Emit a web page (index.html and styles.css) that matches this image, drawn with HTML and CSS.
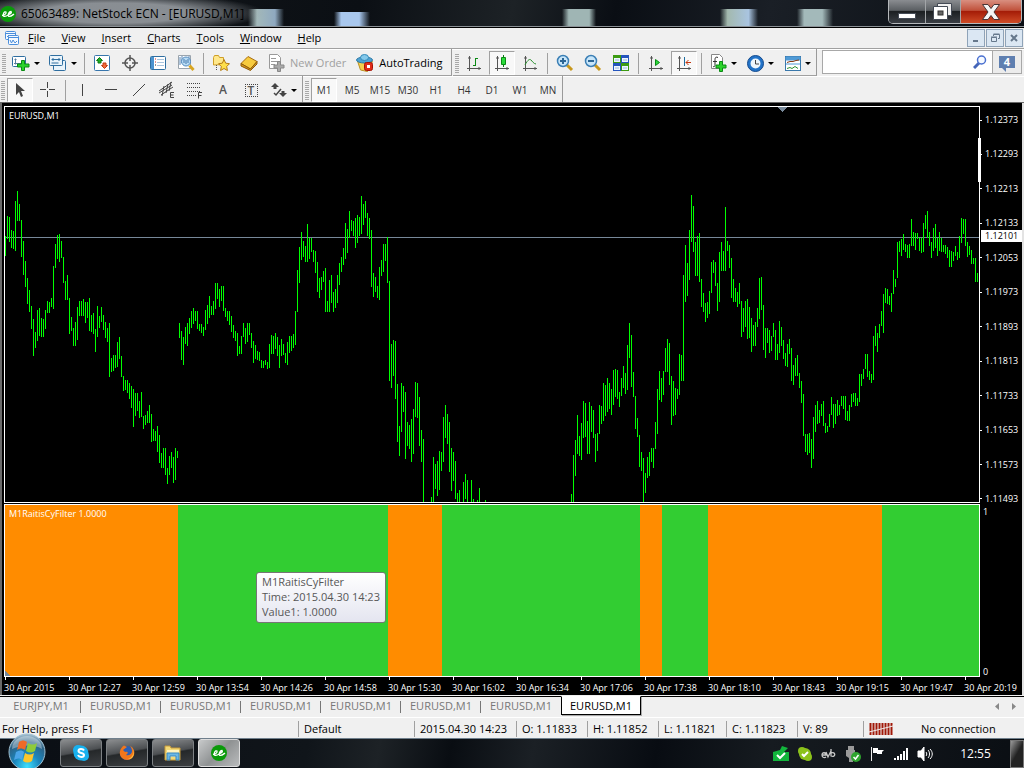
FILE: index.html
```html
<!DOCTYPE html>
<html lang="en">
<head>
  <meta charset="UTF-8">
  <meta name="viewport" content="width=device-width, initial-scale=1.0">
  <title>65063489: NetStock ECN - [EURUSD,M1]</title>
  <link rel="stylesheet" href="styles.css">
</head>
<body>
  <header class="titlebar">
    <svg class="logo" width="16" height="16" viewBox="0 0 16 16"><circle cx="8" cy="8" r="8" fill="#0a9a0a"/><path d="M2 9.500C5 9 6.500 7.500 6 6C4.500 5 2.500 8 3.500 10C5 11.500 7.500 9.500 9 8.500C11 7.500 12 6.500 11 5.500C9 5.500 7.500 9 8.500 10.200C10 11.200 12 9.500 14 8" fill="none" stroke="#fff" stroke-width="1.300"/></svg>
    <h1>65063489: NetStock ECN - [EURUSD,M1]</h1>
    <div class="window-buttons">
      <button aria-label="Minimize"><svg width="20" height="20" viewBox="0 0 20 20"><rect x="1.500" y="11.500" width="17" height="5" fill="#fff" stroke="#444a55"/></svg></button>
      <button aria-label="Restore"><svg width="20" height="20" viewBox="0 0 20 20"><path d="M4.500 1.500h14v12h-14z" fill="#eee" stroke="#444a55"/><path d="M.5 4.500h14v13h-14z" fill="#fff" stroke="#444a55"/><rect x="5" y="9" width="5" height="4" fill="#666" stroke="#333"/></svg></button>
      <button class="close" aria-label="Close"><svg width="20" height="18" viewBox="0 0 20 18"><path d="M1.500 1.500h5.500L10 5.500l3-4h5.500L13 9l5.500 7.500H13L10 12.500l-3 4H1.500L7 9z" fill="#f4f4f4" stroke="#4a3436"/></svg></button>
    </div>
  </header>

  <nav class="menubar">
    <svg width="16" height="16" viewBox="0 0 16 16" fill="#f4f9ff" stroke="#4b8edb"><rect x="1.500" y="1.500" width="10" height="8" rx="1"/><path d="M1.500 3.500h10M3 7l2-2 2 2"/><rect x="4.500" y="5.500" width="10" height="9" rx="1"/><path d="M4.500 7.500h10M6 10l1.500 3L9 10l2 3 2-2" fill="none"/></svg>
    <a href="#"><u>F</u>ile</a>
    <a href="#"><u>V</u>iew</a>
    <a href="#"><u>I</u>nsert</a>
    <a href="#"><u>C</u>harts</a>
    <a href="#"><u>T</u>ools</a>
    <a href="#"><u>W</u>indow</a>
    <a href="#"><u>H</u>elp</a>
    <div class="mdi-buttons">
      <button aria-label="Minimize chart"><svg width="10" height="10" viewBox="0 0 10 10"><path d="M2 8h5" stroke="#66788c" stroke-width="2"/></svg></button>
      <button aria-label="Restore chart"><svg width="10" height="10" viewBox="0 0 10 10" fill="none" stroke="#66788c"><path d="M3.500 3V1.500h6v4H8M3.500 1h6M1.500 4.500h5v4h-5zM1 4h6"/></svg></button>
      <button aria-label="Close chart"><svg width="10" height="10" viewBox="0 0 10 10"><path d="M2 2l6 6M8 2L2 8" stroke="#66788c" stroke-width="2"/></svg></button>
    </div>
  </nav>

  <div class="toolbar-row">
    <div class="toolbar">
      <span class="grip"></span>
      <button class="tool drop" aria-label="New chart"><svg width="18" height="16" viewBox="0 0 18 16"><rect x=".5" y="1.500" width="13" height="10" rx="1" fill="#fff" stroke="#2f6ea0"/><path d="M3.500 3.500v6M2.500 4.500h2M2 8.500h7" stroke="#5a7f9f"/><path d="M9.500 5.500h3v3.500H17v3h-4.500v3.500h-3V12H5.500V9h4z" fill="#2bd32b" stroke="#0a8a14"/></svg></button>
      <button class="tool drop" aria-label="Profiles"><svg width="18" height="16" viewBox="0 0 18 16" fill="#eaf4fb" stroke="#2f6ea0"><rect x="4.500" y="5.500" width="12" height="10" rx="1"/><rect x=".5" y=".5" width="13" height="10" rx="1"/><path d="M2.500 4.500h9M4 3v3M10 3v3M2.500 8h7"/></svg></button>
      <span class="sep"></span>
      <button class="tool" aria-label="Market Watch"><svg width="16" height="16" viewBox="0 0 16 16"><rect x=".5" y=".5" width="15" height="15" rx="1" fill="#fff" stroke="#3876ad"/><path d="M5.500 2.500l3 3h-1.500v2.500H4V5.500H2.500z" fill="#1fae27" stroke="#0b7a13"/><path d="M10.500 13.500l3-3H12V8H9v2.500H7.500z" fill="#f26b3a" stroke="#c03d12"/></svg></button>
      <button class="tool" aria-label="Data Window"><svg width="16" height="16" viewBox="0 0 16 16" fill="none" stroke="#555" stroke-width="1.500"><circle cx="8" cy="8" r="5"/><path d="M8 0v6M8 10v6M0 8h6M10 8h6"/></svg></button>
      <button class="tool" aria-label="Navigator"><svg width="16" height="16" viewBox="0 0 16 16"><rect x=".5" y="1.500" width="15" height="13" rx="1" fill="#fff" stroke="#2f6ea0"/><path d="M1 2h3v12H1z" fill="#4b93cf"/><path d="M7 4.500h7M7 7.500h7M7 10.500h7" stroke="#a9c4dd"/><path d="M5 4h1M5 7h1" stroke="#c22"/><path d="M5 10h1" stroke="#222"/></svg></button>
      <button class="tool" aria-label="Strategy Tester"><svg width="18" height="18" viewBox="0 0 18 18"><path d="M1.500 1.500h12v13h-12z" fill="#fff" stroke="#9aa4ad"/><path d="M3 3v8M5 2v7M12 2v6" stroke="#5a86b5"/><circle cx="9" cy="7.500" r="4.500" fill="#b9dcf5" stroke="#5089bd"/><path d="M7 5v4M9 6v4M11 5v4" stroke="#4479ac"/><path d="M12.500 11.500l4 4.500" stroke="#d8a520" stroke-width="3"/></svg></button>
      <span class="sep"></span>
      <button class="tool" aria-label="Favorites"><svg width="18" height="18" viewBox="0 0 18 18"><path d="M1.500 11V3.500l1-2h4l1 2h4v7z" fill="#ffe88b" stroke="#cf9f27"/><path d="M4.500 11v6" stroke="#555" stroke-dasharray="1 1"/><path d="M12 5.500l1.700 3.700 3.800.5-2.800 2.800.7 4-3.400-2-3.400 2 .7-4L6.500 9.700l3.800-.5z" fill="#ffdf4a" stroke="#b57b14"/></svg></button>
      <button class="tool" aria-label="Market"><svg width="18" height="16" viewBox="0 0 18 16"><path d="M1 8.500L8 1.500l9 5-6.500 7.500z" fill="#f7cb3e" stroke="#a86d10"/><path d="M1 8.500l9.500 5.500L17 6.500v2.500l-6.500 6.500L1 11z" fill="#d79a1c" stroke="#8e5a0b"/></svg></button>
      <button class="tool labeled disabled" disabled><svg width="17" height="18" viewBox="0 0 17 18"><path d="M1.500.5h8l3 3v11h-11z" fill="#fff" stroke="#999"/><path d="M3 4.500h5M3 7.500h7M3 10.500h4" stroke="#999"/><path d="M9.500 7.500h3V11H16v3h-3.500v3.500h-3V14H6v-3h3.500z" fill="#aaa" stroke="#888"/></svg>New Order</button>
      <button class="tool labeled"><svg width="18" height="18" viewBox="0 0 18 18"><path d="M1.500 7l3 9 7 1.500 5-10z" fill="#f4cf4c" stroke="#b88f22"/><ellipse cx="8.500" cy="6" rx="8" ry="3" fill="#4fa3d2" stroke="#2877a6"/><ellipse cx="8.500" cy="3.500" rx="4" ry="3" fill="#83c8ea" stroke="#3389b8"/><rect x="8.500" y="8.500" width="8" height="8" rx="2" fill="#e02a16" stroke="#a51207"/><rect x="11" y="11" width="3" height="3" fill="#fff"/></svg>AutoTrading</button>
    </div>
    <div class="toolbar">
      <span class="grip"></span>
      <button class="tool" aria-label="Bar chart"><svg width="16" height="16" viewBox="0 0 16 16" fill="none" stroke="#555"><path d="M3.500 1v15M1 13.500h14M2 3h3M13 12v3"/><path d="M9.500 3v8M9 3.500h3M7 10.500h3" stroke="#0a8a14"/></svg></button>
      <button class="tool pressed" aria-label="Candlesticks"><svg width="16" height="16" viewBox="0 0 16 16" fill="none" stroke="#555"><path d="M3.500 1v15M1 13.500h14M2 3h3M13 12v3"/><path d="M9.500 0v12" stroke="#0a7a14"/><path d="M7.500 2.500h4v7h-4z" fill="#2bdc3b" stroke="#0a8a14"/></svg></button>
      <button class="tool" aria-label="Line chart"><svg width="16" height="16" viewBox="0 0 16 16" fill="none" stroke="#555"><path d="M3.500 1v15M1 13.500h14M2 3h3M13 12v3"/><path d="M3 10c3-6 5-6 6-5s3 4 5 4" stroke="#2a8f2f"/></svg></button>
      <span class="sep"></span>
      <button class="tool" aria-label="Zoom in"><svg width="18" height="18" viewBox="0 0 18 18"><path d="M11 11l5 5" stroke="#c8981c" stroke-width="3"/><circle cx="7" cy="7" r="5.500" fill="#c8e6fa" stroke="#3b7fb5" stroke-width="1.500"/><path d="M4 7h6M7 4v6" stroke="#2c6695" stroke-width="2"/></svg></button>
      <button class="tool" aria-label="Zoom out"><svg width="18" height="18" viewBox="0 0 18 18"><path d="M11 11l5 5" stroke="#c8981c" stroke-width="3"/><circle cx="7" cy="7" r="5.500" fill="#c8e6fa" stroke="#3b7fb5" stroke-width="1.500"/><path d="M4 7h6" stroke="#2c6695" stroke-width="2"/></svg></button>
      <button class="tool" aria-label="Tile windows"><svg width="16" height="16" viewBox="0 0 16 16"><path d="M0 0h8v8H0zM8 8h8v8H8z" fill="#3c9b12"/><path d="M8 0h8v8H8zM0 8h8v8H0z" fill="#2454bd"/><path d="M1 3h6v4H1zM9 3h6v4H9zM1 11h6v4H1zM9 11h6v4H9z" fill="#eef6ff"/><path d="M2 5h4M10 5h4M2 13h4M10 13h4" stroke="#9bb8d8"/></svg></button>
      <span class="sep"></span>
      <button class="tool" aria-label="Auto scroll"><svg width="16" height="16" viewBox="0 0 16 16" fill="none" stroke="#555"><path d="M3.500 1v15M1 13.500h14M2 3h3M13 12v3"/><path d="M7.500 4.500l4 3-4 3z" fill="#2bdc3b" stroke="#0a8a14"/></svg></button>
      <button class="tool pressed" aria-label="Chart shift"><svg width="16" height="16" viewBox="0 0 16 16" fill="none" stroke="#555"><path d="M3.500 1v15M1 13.500h14M2 3h3M13 12v3"/><path d="M8.500 2v9" stroke="#1f6da0"/><path d="M10 7.500h5M12.500 5L10 7.500l2.500 2.500" stroke="#c4370f"/></svg></button>
      <span class="sep"></span>
      <button class="tool drop" aria-label="Indicators"><svg width="17" height="18" viewBox="0 0 17 18"><path d="M1.500.5h8l3 3v11h-11z" fill="#fff" stroke="#888"/><path d="M8 3.500c-2-1-3 0-3 2v6c0 1-1 1.500-2 1M3 7.500h4" fill="none" stroke="#333"/><path d="M9.500 7.500h3V11H16v3h-3.500v3.500h-3V14H6v-3h3.500z" fill="#2bd32b" stroke="#0a8a14"/></svg></button>
      <button class="tool drop" aria-label="Periods"><svg width="17" height="17" viewBox="0 0 17 17"><circle cx="8.500" cy="8.500" r="6.500" fill="#eef6fc" stroke="#2273c8" stroke-width="3"/><path d="M8.500 5v4H12" fill="none" stroke="#444"/><circle cx="8.500" cy="8.500" r="8" fill="none" stroke="#154b8d"/></svg></button>
      <button class="tool drop" aria-label="Templates"><svg width="16" height="16" viewBox="0 0 16 16"><rect x=".5" y="1.500" width="15" height="14" fill="#fff" stroke="#3a78ab"/><path d="M1 2h14v3H1zM1 9h14" fill="#4f9ad6" stroke="#4f9ad6"/><path d="M2 7.500l3-1h3l3-1 3-.5" fill="none" stroke="#8a3a12"/><path d="M2 13.500l3-1 2 1 3-2 3 2" fill="none" stroke="#2a8f2f"/></svg></button>
    </div>
    <form class="search">
      <input type="text" aria-label="Search">
      <button type="button" class="find" aria-label="Find"><svg width="14" height="14" viewBox="0 0 14 14" fill="none"><path d="M6 8l-5 5" stroke="#4465b8" stroke-width="3"/><circle cx="8.500" cy="5" r="4" fill="#f6faff" stroke="#4a70d0" stroke-width="1.500"/></svg></button>
      <button type="button" class="alerts" aria-label="4 messages"><span>4</span></button>
    </form>
  </div>

  <div class="toolbar-row second">
    <div class="toolbar">
      <span class="grip"></span>
      <button class="tool pressed" aria-label="Cursor"><svg width="16" height="16" viewBox="0 0 16 16"><path d="M4 1v12l3-3 2 5 2-1-2-5h4z" fill="#444"/></svg></button>
      <button class="tool" aria-label="Crosshair"><svg width="16" height="16" viewBox="0 0 16 16" stroke="#444"><path d="M7.500 0v6M7.500 9v6M0 7.500h6M9 7.500h6"/></svg></button>
      <span class="sep"></span>
      <button class="tool" aria-label="Vertical line"><svg width="16" height="16" viewBox="0 0 16 16" stroke="#444"><path d="M7.500 2v12"/></svg></button>
      <button class="tool" aria-label="Horizontal line"><svg width="16" height="16" viewBox="0 0 16 16" stroke="#444"><path d="M2 7.500h12"/></svg></button>
      <button class="tool" aria-label="Trendline"><svg width="16" height="16" viewBox="0 0 16 16" stroke="#444"><path d="M2 14L14 2"/></svg></button>
      <button class="tool" aria-label="Equidistant channel"><svg width="18" height="18" viewBox="0 0 18 18" stroke="#444" fill="none"><path d="M1 10L14 1M3 14L15 6M4 15L6 5M8 12l2-9M11 10l2-9M1 12l13-8"/><path d="M16 11.500h-3.500v5H16M12 14h3.500"/></svg></button>
      <button class="tool" aria-label="Fibonacci retracement"><svg width="18" height="18" viewBox="0 0 18 18" stroke="#444" fill="none"><path d="M1 2.500h14M1 6.500h14M1 10.500h14M1 14.500h9" stroke-dasharray="1 1"/><path d="M16 11.500h-3.500v6M12 14.500h3.500"/></svg></button>
      <button class="tool letter">A</button>
      <button class="tool letter boxed" aria-label="Text label"><span>T</span></button>
      <button class="tool drop" aria-label="Arrows"><svg width="16" height="16" viewBox="0 0 16 16" fill="#444"><path d="M4 1l4 4H5.500v2h-3V5H0zM12 15l-4-4h2.500V9h3v2H16z"/><path d="M3 11l2 2 5-6" fill="none" stroke="#444" stroke-width="1.500"/></svg></button>
    </div>
    <div class="toolbar">
      <span class="grip"></span>
      <button class="tool pressed">M1</button>
      <button class="tool">M5</button>
      <button class="tool">M15</button>
      <button class="tool">M30</button>
      <button class="tool">H1</button>
      <button class="tool">H4</button>
      <button class="tool">D1</button>
      <button class="tool">W1</button>
      <button class="tool">MN</button>
    </div>
  </div>

  <main class="chart">
    <section class="pane price">
      <h2>EURUSD,M1</h2>
      <svg class="plot" id="bars" viewBox="0 9 2922 1185" preserveAspectRatio="none" shape-rendering="crispEdges">
        <rect x="0" y="399" width="2922" height="3" fill="#778899"/>
        <path d="M2316 9h30l-15 15z" fill="#778899"/>
      </svg>
    </section>
    <div class="scale">
      <span>1.12373</span>
      <span>1.12293</span>
      <span>1.12213</span>
      <span>1.12133</span>
      <span>1.12053</span>
      <span>1.11973</span>
      <span>1.11893</span>
      <span>1.11813</span>
      <span>1.11733</span>
      <span>1.11653</span>
      <span>1.11573</span>
      <span>1.11493</span>
      <b class="bid">1.12101</b>
      <i class="thumb"></i>
    </div>
    <section class="pane filter">
      <h2>M1RaitisCyFilter 1.0000</h2>
      <svg class="plot" viewBox="0 0 974 171" preserveAspectRatio="none" shape-rendering="crispEdges">
        <rect width="974" height="171" fill="#32cd32"/>
        <path d="M0 0h173v171H0zM383 0h54v171h-54zM635 0h22v171h-22zM703 0h174v171H703z" fill="#ff8c00"/>
        <path d="M0 166l5 5H0z" fill="#778899"/>
      </svg>
      <div class="tip">M1RaitisCyFilter<br>Time: 2015.04.30 14:23<br>Value1: 1.0000</div>
    </section>
    <div class="scale range"><span>1</span><span>0</span></div>
    <div class="times">
      <span>30 Apr 2015</span>
      <span>30 Apr 12:27</span>
      <span>30 Apr 12:59</span>
      <span>30 Apr 13:54</span>
      <span>30 Apr 14:26</span>
      <span>30 Apr 14:58</span>
      <span>30 Apr 15:30</span>
      <span>30 Apr 16:02</span>
      <span>30 Apr 16:34</span>
      <span>30 Apr 17:06</span>
      <span>30 Apr 17:38</span>
      <span>30 Apr 18:10</span>
      <span>30 Apr 18:43</span>
      <span>30 Apr 19:15</span>
      <span>30 Apr 19:47</span>
      <span>30 Apr 20:19</span>
    </div>
  </main>

  <nav class="tabs">
    <a href="#">EURJPY,M1</a>
    <a href="#">EURUSD,M1</a>
    <a href="#">EURUSD,M1</a>
    <a href="#">EURUSD,M1</a>
    <a href="#">EURUSD,M1</a>
    <a href="#">EURUSD,M1</a>
    <a href="#">EURUSD,M1</a>
    <a href="#" class="active">EURUSD,M1</a>
    <div class="tab-arrows">
      <button aria-label="Previous"><svg width="4" height="7" viewBox="0 0 4 7"><path d="M4 0v7L0 3.500z" fill="#888"/></svg></button>
      <button aria-label="Next"><svg width="4" height="7" viewBox="0 0 4 7"><path d="M0 0v7l4-3.500z" fill="#888"/></svg></button>
    </div>
  </nav>

  <div class="status">
    <span class="help">For Help, press F1</span>
    <span class="profile">Default</span>
    <span class="date">2015.04.30 14:23</span>
    <span class="quote">O: 1.11833</span>
    <span class="quote">H: 1.11852</span>
    <span class="quote narrow">L: 1.11821</span>
    <span class="quote">C: 1.11823</span>
    <span class="volume">V: 89</span>
    <span class="connection"><svg width="24" height="12" viewBox="0 0 24 12"><path d="M1.500 0v12M4.500 0v12M7.500 0v12M10.500 0v12M13.500 0v12M16.500 0v12M19.500 0v12M22.500 0v12" stroke="#a01808" stroke-width="2"/><path d="M0 9l24-6" stroke="#efefef"/></svg>No connection</span>
  </div>

  <footer class="taskbar">
    <button class="start" aria-label="Start">
      <svg width="38" height="36" viewBox="0 0 38 36">
        <defs>
          <radialGradient id="orb" cx=".5" cy=".9" r=".9"><stop offset="0" stop-color="#3fe0ff"/><stop offset=".4" stop-color="#1b86bd"/><stop offset=".75" stop-color="#2d6285"/><stop offset="1" stop-color="#a9c4d4"/></radialGradient>
        </defs>
        <circle cx="19" cy="19" r="18" fill="url(#orb)" stroke="#9fc0d2"/>
        <path d="M4 16a15 13 0 0 1 30 0c-9-5-20-4-30 0z" fill="#fff" opacity=".35"/>
        <path d="M11 9c3-2 5-2 8 0l-2 8c-3-2-5-2-8 0z" fill="#ee6a28"/>
        <path d="M20 10c3 2 6 2 9 0l-2 8c-3 2-6 2-9 0z" fill="#8ecb3a"/>
        <path d="M8 19c3-2 6-2 8 0l-2 8c-2-2-5-2-8 0z" fill="#4aa5e8"/>
        <path d="M17 20c3 2 6 2 9 0l-2 8c-3 2-6 2-9 0z" fill="#fcc62c"/>
      </svg>
    </button>
    <button class="app" aria-label="Skype"><svg width="18" height="18" viewBox="0 0 18 18"><circle cx="6" cy="6" r="5" fill="#19b1ee"/><circle cx="12" cy="12" r="5" fill="#19b1ee"/><circle cx="9" cy="9" r="7.500" fill="#19b1ee"/><path d="M12 6.500C11 4.500 6.500 4.500 6.500 7c0 2.500 5.500 1.500 5.500 4 0 2.500-5 2.500-6 0" fill="none" stroke="#fff" stroke-width="2"/></svg></button>
    <button class="app" aria-label="Firefox"><svg width="18" height="18" viewBox="0 0 18 18"><circle cx="9" cy="9" r="7" fill="#2b5fb4"/><path d="M6 1.500L9 3 5 6l2 2c4-1 3 2 1 3 3 1 6-1 6-4 0-2-1-4-2-5 4 2 5 6 4 9-2 6-9 6-12 3C0 10 2 4 6 1.500z" fill="#f0761c"/><path d="M14 3c3 4 1 11-4 12 5 1 8-6 4-12z" fill="#ffc43a"/></svg></button>
    <button class="app" aria-label="Explorer"><svg width="18" height="18" viewBox="0 0 18 18"><path d="M1 2h5l1 2h9v12H1z" fill="#f3d978" stroke="#c79b3b"/><path d="M3 6h12v7H3z" fill="#fff3bf"/><path d="M3 16V9h12v7h-3v-4H6v4z" fill="#6bb7e6" stroke="#3b88bd"/></svg></button>
    <button class="app current" aria-label="NetStock ECN"><svg width="16" height="16" viewBox="0 0 16 16"><circle cx="8" cy="8" r="8" fill="#0a9a0a"/><path d="M2 9.500C5 9 6.500 7.500 6 6C4.500 5 2.500 8 3.500 10C5 11.500 7.500 9.500 9 8.500C11 7.500 12 6.500 11 5.500C9 5.500 7.500 9 8.500 10.200C10 11.200 12 9.500 14 8" fill="none" stroke="#fff" stroke-width="1.300"/></svg></button>
    <div class="tray">
      <svg width="16" height="16" viewBox="0 0 16 16"><path d="M0 6l7-2 2-4 6 2-4 4h5v9H0z" fill="#12b53c"/><path d="M4 9l3 3 5-5" fill="none" stroke="#fff" stroke-width="2"/></svg>
      <svg width="16" height="16" viewBox="0 0 16 16"><circle cx="5" cy="5" r="4" fill="#8cc21b"/><circle cx="11" cy="11" r="4" fill="#8cc21b"/><circle cx="8" cy="8" r="6" fill="#8cc21b"/><path d="M5 8l2 2 4-4" fill="none" stroke="#fff" stroke-width="2"/></svg>
      <svg width="16" height="16" viewBox="0 0 16 16" fill="none" stroke="#c9c9c9" stroke-width="1.300"><path d="M1 9h4c0-3-4-3-4 0s3 3 4 2M5 6l2 5 3-6M10 3v7c5 2 5-5 0-3"/></svg>
      <svg width="16" height="16" viewBox="0 0 16 16"><path d="M3 0h6v4H3zM1 4h9v6l-2 2v4H4v-4l-3-2z" fill="#9a9a9a"/><circle cx="11" cy="11" r="5" fill="#2fa52f"/><path d="M8.500 11l2 2 3-4" fill="none" stroke="#fff" stroke-width="1.500"/></svg>
      <svg width="16" height="16" viewBox="0 0 16 16"><path d="M2.500 1v14" stroke="#eee"/><path d="M4 2h5v2h6l-2 2v2H8V7H4z" fill="#fff"/></svg>
      <svg width="16" height="16" viewBox="0 0 16 16" fill="#fff"><path d="M1 12h2v2H1zM4 10h2v4H4zM7 8h2v6H7zM10 5h2v9h-2zM13 2h2v12h-2z"/></svg>
      <svg width="16" height="16" viewBox="0 0 16 16" fill="none" stroke="#fff"><path d="M1 5h3l3-4v14l-3-4H1z" fill="#fff"/><path d="M9 6c1 1 1 3 0 4M11 4c2 2 2 6 0 8M13 3c3 3 3 7 0 10"/></svg>
      <time>12:55</time>
      <button class="desktop" aria-label="Show desktop"></button>
    </div>
  </footer>

  <script src="chart.js"></script>
</body>
</html>
```
FILE: styles.css
```css
* {
  box-sizing: border-box;
}
body {
  margin: 0;
  height: 100vh;
  display: flex;
  flex-direction: column;
  overflow: hidden;
  font-family: "Open Sans", "Noto Sans", sans-serif;
  font-size: 11px;
  line-height: 16px;
  color: #000;
  background: #f0f0f0;
}
button {
  border: 0;
  padding: 0;
  margin: 0;
  background: none;
  font: inherit;
  color: inherit;
  display: flex;
  align-items: center;
  justify-content: center;
}
a {
  color: inherit;
  text-decoration: none;
}
svg {
  display: block;
  flex: none;
}
h1, h2 {
  margin: 0;
  font-weight: 400;
}

/* title bar */
.titlebar {
  height: 28px;
  flex: none;
  display: flex;
  align-items: center;
  gap: 5px;
  border-bottom: 1px solid #000;
  box-shadow: inset 0 -1px #8b9196;
  background:
    radial-gradient(ellipse 150px 20px at 115px 13px, rgba(150, 155, 160, 0.9) 50%, transparent),
    linear-gradient(90deg, transparent, #a3b9ba 25%, #8fa9c0 75%, transparent) 248px 9px / 36px 20px no-repeat,
    linear-gradient(90deg, transparent, #a9c8ee 20%, #a9c8ee 70%, transparent) 334px 12px / 36px 16px no-repeat,
    linear-gradient(90deg, transparent, #9fb5b4 20%, #9fb5b4 80%, transparent) 562px 9px / 34px 20px no-repeat,
    linear-gradient(90deg, transparent, #a3b9ae 20%, #a9c4e0 75%, transparent) 720px 9px / 38px 20px no-repeat,
    linear-gradient(90deg, transparent, #a3b9ba 20%, #a3b9ba 70%, transparent) 797px 9px / 36px 20px no-repeat,
    linear-gradient(100deg, #14181b, #0b0f14 35%, #1d2226 50%, #0a0e14 60%, #1a1f26 75%, #0a0e14);
}
.titlebar .logo {
  align-self: flex-start;
  margin-top: 6px;
}
.titlebar h1 {
  font-size: 12px;
}
.window-buttons {
  display: flex;
  align-self: flex-start;
  margin-left: auto;
  margin-right: 2px;
  height: 24px;
  border: 1px solid #b5b8bb;
  border-top: 0;
  border-radius: 0 0 5px 5px;
  overflow: hidden;
}
.window-buttons button {
  width: 37px;
  border-right: 1px solid #a2a5a8;
  background: linear-gradient(#8a8d91, #5a5e62 45%, #1c1f22 50%, #3a3e44);
}
.window-buttons button:nth-child(2) {
  width: 35px;
}
.window-buttons .close {
  width: 60px;
  border-right: 0;
  background: linear-gradient(#d98f80, #c0513b 45%, #a51d08 50%, #cf4b26);
}

/* menu */
.menubar {
  height: 21px;
  flex: none;
  display: flex;
  align-items: center;
  gap: 16px;
  padding: 0 1px 0 4px;
  border-bottom: 1px solid #a0a0a0;
}
.menubar > svg {
  margin-right: -8px;
}
.menubar a {
  white-space: nowrap;
}
.mdi-buttons {
  display: flex;
  gap: 1px;
  margin-left: auto;
}
.mdi-buttons button {
  width: 18px;
  height: 18px;
  border: 1px solid #8fa3b8;
  background: #dbe7f3;
}

/* toolbars */
.toolbar-row {
  height: 27px;
  flex: none;
  display: flex;
  box-shadow: inset 0 1px #fff;
}
.toolbar {
  display: flex;
  align-items: center;
  padding: 2px 4px 0 2px;
  border-right: 1px solid #9a9a9a;
  border-bottom: 1px solid #a0a0a0;
  margin-right: 1px;
}
.toolbar:nth-child(2) {
  padding-right: 0;
}
.second {
  border-bottom: 1px solid #696969;
}
.second .toolbar {
  border-bottom: 0;
  padding-left: 1px;
  padding-right: 0;
}
.grip {
  width: 4px;
  height: 19px;
  margin-right: 1px;
  background: repeating-linear-gradient(#a8a8a8 0 1px, #f0f0f0 1px 2px);
}
.sep {
  width: 1px;
  height: 21px;
  margin: 0 3px;
  background: #a0a0a0;
}
.tool {
  width: 28px;
  height: 24px;
  font-size: 10px;
  color: #333;
}
.drop {
  width: 37px;
  gap: 4px;
}
.drop::after {
  content: "";
  border: 3px solid transparent;
  border-top-color: #000;
  border-bottom: 0;
}
.labeled {
  width: auto;
  gap: 5px;
  padding: 0 5px;
  font-size: 11px;
  color: #000;
  white-space: nowrap;
}
.disabled {
  color: #a0a0a0;
}
.pressed {
  width: 26px;
  margin: 0 1px;
  border: 1px solid #fff;
  border-top-color: #a0a0a0;
  border-left-color: #a0a0a0;
  background: #f8f8f8;
}
.letter {
  font-size: 12px;
  font-weight: 600;
  color: #555;
}
.boxed span {
  width: 13px;
  height: 13px;
  line-height: 12px;
  border: 1px dotted #444;
}
.search {
  flex: 1;
  display: flex;
  margin: 1px 2px 2px 4px;
  border: 1px solid #a8a8a8;
  background: #fff;
  min-width: 0;
}
.search input {
  flex: 1;
  min-width: 0;
  border: 0;
  background: none;
  outline: none;
}
.find {
  width: 24px;
}
.alerts {
  width: 29px;
  border-left: 1px solid #a8a8a8;
  background: #ececec;
}
.alerts span {
  position: relative;
  width: 16px;
  height: 12px;
  line-height: 12px;
  font-weight: 700;
  background: #5f7fb0;
  color: #fff;
}
.alerts span::after {
  content: "";
  position: absolute;
  left: 3px;
  top: 12px;
  border-top: 4px solid #5f7fb0;
  border-left: 4px solid transparent;
}

/* chart */
.chart {
  flex: 1;
  min-height: 0;
  display: grid;
  grid-template-columns: minmax(0, 1fr) 42px;
  grid-template-rows: minmax(0, 397fr) minmax(0, 173fr) 17px;
  row-gap: 1px;
  padding: 3px 0 0 2px;
  border: solid #696969;
  border-width: 0 2px 0 2px;
  border-right-color: #e3e3e3;
  background: #000;
  color: #fff;
  font-size: 9px;
}
.pane {
  position: relative;
  border: 1px solid #fff;
}
.plot {
  width: 100%;
  height: 100%;
}
.pane h2 {
  position: absolute;
  left: 4px;
  top: 1px;
  font-size: 9px;
}
.scale {
  position: relative;
  display: flex;
  flex-direction: column;
  justify-content: space-between;
  padding: 6px 0 0;
  margin-bottom: -4px;
}
.scale span {
  display: flex;
  align-items: center;
  gap: 3px;
}
.scale span::before {
  content: "";
  width: 2px;
  height: 1px;
  background: #fff;
}
.bid {
  position: absolute;
  left: 1px;
  right: 0;
  top: 31%;
  height: 12px;
  line-height: 12px;
  padding-left: 4px;
  font-weight: 400;
  background: #fff;
  color: #000;
}
.thumb {
  position: absolute;
  left: -2px;
  top: 8%;
  width: 3px;
  height: 44px;
  background: #fff;
}
.range {
  padding: 0;
  margin-bottom: -3px;
}
.range span::before {
  width: 0;
}
.tip {
  position: absolute;
  left: 251px;
  top: 67px;
  padding: 1px 5px 3px;
  border: 1px solid #767676;
  border-radius: 3px;
  background: linear-gradient(#fff, #e4e5f0);
  color: #575757;
  font-size: 11px;
  line-height: 15px;
  white-space: nowrap;
}
.times {
  grid-column: 1 / -1;
  display: grid;
  grid-template-columns: repeat(16, minmax(0, 1fr));
  margin-right: -6px;
  margin-top: -1px;
}
.times span {
  white-space: nowrap;
  line-height: 15px;
}
.times span::before {
  content: "";
  display: block;
  width: 1px;
  height: 3px;
  margin-left: 1px;
  background: #fff;
}

/* chart tabs */
.tabs {
  height: 21px;
  flex: none;
  display: flex;
  align-items: flex-start;
  margin-top: 1px;
  padding-left: 1px;
  border-top: 1px solid #000;
  color: #777;
}
.tabs a {
  position: relative;
  width: 80px;
  height: 19px;
  line-height: 18px;
  text-align: center;
}
.tabs a::after {
  content: "";
  position: absolute;
  right: 0;
  top: 4px;
  width: 1px;
  height: 12px;
  background: #777;
}
.tabs a:nth-child(7)::after,
.tabs .active::after {
  display: none;
}
.tabs .active {
  margin-top: -1px;
  border: 1px solid #000;
  border-top-color: #fff;
  background: #fff;
  color: #000;
  box-shadow: 1px 1px #aaa;
}
.tab-arrows {
  display: flex;
  gap: 13px;
  margin-left: auto;
  padding: 6px 8px;
}

/* status bar */
.status {
  height: 21px;
  flex: none;
  display: flex;
  align-items: center;
  padding-top: 1px;
  border-top: 1px solid #fff;
  white-space: nowrap;
}
.status span {
  padding-left: 5px;
  border-left: 1px solid #a0a0a0;
}
.status .help {
  flex: 1;
  border: 0;
  padding-left: 2px;
}
.profile {
  width: 116px;
}
.date {
  width: 102px;
}
.quote {
  width: 71px;
}
.narrow {
  width: 68px;
}
.volume {
  width: 66px;
}
.connection {
  width: 161px;
  display: flex;
  align-items: center;
  gap: 28px;
}

/* taskbar */
.taskbar {
  height: 30px;
  flex: none;
  display: flex;
  gap: 4px;
  padding-left: 8px;
  border-top: 1px solid #6f7f8c;
  background: linear-gradient(100deg, #0a0e14, #10151a 30%, #1d2226 37%, #090d12 44%, #1b2025 52%, #080c12 64%, #161b20 75%, #0a0e13);
}
.start {
  height: 36px;
  margin: -6px 10px 0 0;
  position: relative;
}
.app {
  width: 42px;
  height: 28px;
  border: 1px solid #7d8184;
  border-radius: 3px;
  background: linear-gradient(170deg, #8b8d8f, #4c4f52 45%, #25282a 50%, #3c3f42);
}
.current {
  border-color: #ddd;
  background: linear-gradient(135deg, #c7c9ca, #8f9293 50%, #b9bbbc);
}
.tray {
  display: flex;
  align-items: center;
  gap: 8px;
  margin-left: auto;
  color: #fff;
}
.tray time {
  width: 41px;
  text-align: center;
  font-size: 12px;
  margin: 0 6px 0 14px;
}
.desktop {
  width: 14px;
  height: 28px;
  border: 1px solid #777;
  background: linear-gradient(120deg, #999, #222 50%);
}
```
FILE: chart.js
```js
// runs of bars: index of the first bar, then top-bottom of each one
const runs = [
  { start: 0, bars: `
396-455 336-405 339-413 378-431 381-434 291-440 261-350 300-350 348-458 411-512 471-548 522-599 558-623 606-674
645-755 684-731 618-710 612-695 642-698 645-698 618-674 591-626 594-626 582-608 486-614 420-491 393-464 390-473
411-461 459-536 531-587 513-587 582-689 639-680 672-725 654-725 609-707 591-635 591-635 585-635 594-656 594-641
582-680 633-683 627-689 675-743 606-698 636-671 609-653 633-677 654-701 672-713 657-818 762-803 753-800 753-791
714-788 699-764 756-818 816-860 828-857 828-866 837-884 846-911 855-968 867-935 867-920 891-941 864-938 936-974
933-962 921-956 903-956 930-1013 975-1010 981-1010 966-1043 993-1076 1047-1091 1032-1091 1032-1112 1092-1139
1056-1112 1044-1091 1059-1136 1032-1127 1041-1061 657-701 681-767 699-782 669-719 657-725 642-689 621-671
612-659 621-650 621-674 660-680 660-686 669-695 618-677 603-659 576-641 606-632 591-632 537-614 537-584 555-608
546-590 546-620 612-638 621-650 621-662 636-683 663-701 681-710 687-755 726-749 696-749 657-698 672-719 657-713
657-692 687-731 711-776 723-764 741-767 744-770 768-791 771-791 768-782 774-794 720-791 693-749 696-749 687-734
699-755 723-791 705-755 720-752 747-776 714-782 696-746 696-740 690-731 621-722 498-623 429-536 384-467 411-458
426-473 360-473 402-464 402-443 438-473 441-506 474-563 522-581 519-557 501-533 492-623 591-623 528-623 513-596
564-623 555-611 513-596 477-542
459-503 432-482 357-464 375-446 321-401 348-380 351-395 342-431 333-416 339-395 276-389 300-362 291-341 327-395
342-404 378-548 507-578 519-563 546-581 489-587 468-515 420-503 420-470 399-536 531-830 720-851 708-815 711-884
840-1013 966-1055 837-983 846-923 864-1064 954-1025 963-1034 945-1073 915-1049 834-938 837-941 879-1025 978-1073
1005-1194` },
  { start: 213, bars: `
1179-1194 1059-1194 1080-1154 1071-1175 1041-1157 1044-1100 939-1073 903-1001 930-1019 954-1103 1032-1160
1044-1130 1071-1184 1167-1194 1158-1194` },
  { start: 229, bars: '1134-1194 1110-1184 1128-1194' },
  { start: 233, bars: '1128-1194 1185-1194' },
  { start: 236, bars: '1188-1194 1152-1194' },
  { start: 240, bars: '1188-1194' },
  { start: 283, bars: `
1170-1194 1053-1194 1008-1115 933-1049 996-1055 957-1067 891-1001 897-998 951-1049 894-1049 906-983 918-1001
990-1073 987-1040 903-989 906-959 837-950 843-935 822-923 837-914 855-932 798-902 795-878 798-884 864-908 822-875
786-851 807-869 723-857 657-761 693-848 804-878 876-974 942-998 993-1088 1044-1100 1062-1194 1107-1166 1059-1121
1044-1115 1032-1073 1032-1091 954-1034 855-989 801-887 822-893 801-872 732-803 705-803 717-842 816-962 831-935
852-932 855-884 750-872
753-830 513-830 423-593 477-575 378-527 273-413 306-443 414-515 396-515 387-533 525-608 567-623 597-653 594-641
561-629 474-566 468-506 474-545 537-620 444-593 414-500 441-500 309-500 411-440 423-491 462-581 525-593 552-593
564-608 537-599 591-698 612-683 591-668 585-704 609-701 642-743 663-725 654-725 612-668 522-644 519-617 603-737
672-761 672-716 678-746 696-740 657-698 678-767 720-767 651-746 669-725 708-764 747-785 720-788 705-749 732-830
783-842 762-815 753-815 807-851 831-896 870-995 990-1043 990-1052 987-1046 1005-1091 939-1064 903-983 891-959
918-956 900-935 891-965 957-986 966-983 930-968 879-932 900-971 900-959 888-935 903-932 876-905 876-914 876-947
921-950 903-950 870-908 867-893 867-905 882-905 810-893 810-845 795-824 750-794 750-818 801-827 810-836 696-827
666-725 687-743 660-701 621-665 570-686 552-596 555-599 576-602 567-623 498-569 525-548 414-521 411-443 405-455
390-437 420-443 423-461 420-461 345-425 384-425 387-437 387-404 402-440 402-446 357-443 333-374 321-401 384-425
414-461 372-440 360-431 402-455 384-440 402-443 423-443 423-449 429-461 438-488 441-488 444-470 426-455 444-467
396-461 342-416 345-389 345-425 414-458 426-452 438-479 462-479 462-533 507-533` }
];

let d = '';
runs.forEach(run => {
  run.bars.trim().split(/\s+/).forEach((bar, i) => {
    const [top, bottom] = bar.split('-').map(Number);
    const x = (run.start + i) * 6;
    d += `M${x} ${top}h3V${bottom + 1}h-3z`;
  });
});

const path = document.createElementNS('http://www.w3.org/2000/svg', 'path');
path.setAttribute('d', d);
path.setAttribute('fill', '#00ff00');
document.getElementById('bars').appendChild(path);
```
